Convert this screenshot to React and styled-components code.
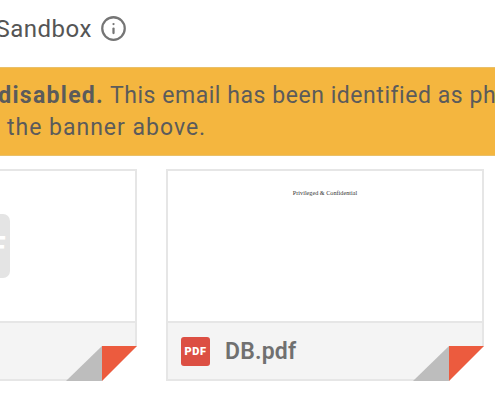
import React from "react";
import styled, { createGlobalStyle } from "styled-components";
import { Info } from "lucide-react";

const GlobalStyle = createGlobalStyle`
  html, body {
    margin: 0;
    padding: 0;
    background: #fff;
    overflow: hidden;
  }
`;

const Viewport = styled.div`
  width: 495px;
  height: 400px;
  overflow: hidden;
  font-family: Roboto, "Noto Sans", sans-serif;
`;

const Page = styled.div`
  width: 900px;
  margin-left: -181px;
`;

const TitleRow = styled.div`
  display: flex;
  justify-content: flex-start;
  align-items: center;
  gap: 8px;
  height: 67px;
  padding: 0 0 10px 0;
  box-sizing: border-box;
  font-size: 24px;
  color: #555;
  white-space: nowrap;
`;

const TitleText = styled.span`
  margin-left: 80px;
  letter-spacing: 0.5px;
`;

const InfoIcon = styled(Info)`
  color: #757575;
  flex: none;
`;

const Banner = styled.div`
  height: 89px;
  box-sizing: border-box;
  background: #f4b63f;
  border-top: 1px solid #e9c069;
  border-bottom: 1px solid #e9c069;
  padding: 12px 0 0 0;
  font-size: 23px;
  line-height: 32px;
  color: #5b5b5b;
  white-space: nowrap;
`;

const BannerLine = styled.div`
  padding-left: ${(p) => p.$indent}px;
  letter-spacing: ${(p) => p.$spacing}px;
`;

const BannerStrong = styled.b`
  letter-spacing: 1.3px;
`;

const Cards = styled.div`
  display: flex;
  gap: 29px;
  margin-top: 13px;
`;

const Card = styled.div`
  position: relative;
  width: 318px;
  height: 212px;
  box-sizing: border-box;
  border: 2px solid #e6e6e6;
  display: flex;
  flex-direction: column;
`;

const Preview = styled.div`
  flex: 1;
  display: flex;
  align-items: ${(p) => (p.$doc ? "flex-start" : "center")};
  justify-content: center;
  background: #fff;
`;

const PreviewIcon = styled.div`
  width: 64px;
  height: 64px;
  border-radius: 7px;
  background: #e4e4e4;
  color: #fff;
  font-size: 30px;
  font-weight: 700;
  display: flex;
  align-items: center;
  justify-content: center;
`;

const DocLine = styled.div`
  margin-top: 17px;
  font-family: "Liberation Serif", serif;
  font-size: 6.2px;
  line-height: 9px;
  color: #333;
`;

const Footer = styled.div`
  height: 58px;
  box-sizing: border-box;
  background: #f4f4f4;
  border-top: 2px solid #e6e6e6;
  display: flex;
  align-items: center;
  gap: 15px;
  padding: 0 0 0 13px;
`;

const PdfBadge = styled.div`
  width: 29px;
  height: 29px;
  border-radius: 3px;
  background: #dc4f43;
  color: #fff;
  font-size: 11px;
  font-weight: 900;
  letter-spacing: 0.5px;
  display: flex;
  align-items: center;
  justify-content: center;
`;

const FileName = styled.span`
  font-size: 23px;
  font-weight: 600;
  letter-spacing: 0.2px;
  color: #707070;
`;

const FoldSvg = styled.svg`
  position: absolute;
  right: -2px;
  bottom: -2px;
  display: block;
`;

const Fold = () => (
  <FoldSvg width="71" height="35" viewBox="0 0 71 35">
    <polygon points="71,0 71,35 36,35" fill="#fff" />
    <polygon points="36,0 36,35 0,35" fill="#bdbdbd" />
    <polygon points="36,0 71,0 36,35" fill="#ec5b3e" />
  </FoldSvg>
);

const App = () => (
  <Viewport>
    <GlobalStyle />
    <Page>
      <TitleRow>
        <TitleText>Security Sandbox</TitleText>
        <InfoIcon size={27} strokeWidth={2} />
      </TitleRow>
      <Banner>
        <BannerLine $indent={25} $spacing={0.55}>
          <BannerStrong>Attachments disabled.</BannerStrong> This email has been identified as phishing.
        </BannerLine>
        <BannerLine $indent={46} $spacing={1}>To view, use the banner above.</BannerLine>
      </Banner>
      <Cards>
        <Card>
          <Preview>
            <PreviewIcon>PDF</PreviewIcon>
          </Preview>
          <Footer />
          <Fold />
        </Card>
        <Card>
          <Preview $doc>
            <DocLine>Privileged &amp; Confidential</DocLine>
          </Preview>
          <Footer>
            <PdfBadge>PDF</PdfBadge>
            <FileName>DB.pdf</FileName>
          </Footer>
          <Fold />
        </Card>
      </Cards>
    </Page>
  </Viewport>
);

export default App;
